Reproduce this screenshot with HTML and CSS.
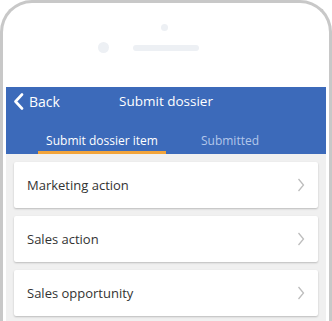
FILE: index.html
```html
<!DOCTYPE html>
<html lang="en">
<head>
  <meta charset="UTF-8" />
  <meta name="viewport" content="width=device-width, initial-scale=1.0"/>
  <title>Submit dossier</title>
  <link rel="stylesheet" href="styles.css">
</head>
<body>

  <div class="phone">
    <div class="bezel">
      <div class="kamera"></div>
      <div class="lautsprecher-reihe">
        <div class="sensor"></div>
        <div class="lautsprecher"></div>
        <div class="sensor leer"></div>
      </div>
    </div>

    <div class="screen">
      <div class="kopf">
        <div class="navbar">
          <div class="zurueck">
            <svg width="11" height="17" viewBox="0 0 11 17">
              <polyline points="9,1.5 2.5,8.5 9,15.5" fill="none" stroke="#fff" stroke-width="2.6" stroke-linecap="round" stroke-linejoin="round"/>
            </svg>
            <span>Back</span>
          </div>
          <div class="titel">Submit dossier</div>
          <div></div>
        </div>
        <div class="tabs">
          <div class="tab aktiv">Submit dossier item</div>
          <div class="tab">Submitted</div>
        </div>
      </div>

      <div class="liste">
        <div class="eintrag">
          <span>Marketing action</span>
          <svg class="pfeil" width="8" height="14" viewBox="0 0 8 14">
            <polyline points="1.5,1 6.5,7 1.5,13" fill="none" stroke="#bdbdbd" stroke-width="1.3"/>
          </svg>
        </div>
        <div class="eintrag">
          <span>Sales action</span>
          <svg class="pfeil" width="8" height="14" viewBox="0 0 8 14">
            <polyline points="1.5,1 6.5,7 1.5,13" fill="none" stroke="#bdbdbd" stroke-width="1.3"/>
          </svg>
        </div>
        <div class="eintrag">
          <span>Sales opportunity</span>
          <svg class="pfeil" width="8" height="14" viewBox="0 0 8 14">
            <polyline points="1.5,1 6.5,7 1.5,13" fill="none" stroke="#bdbdbd" stroke-width="1.3"/>
          </svg>
        </div>
      </div>
    </div>
  </div>

</body>
</html>
```

FILE: styles.css
```css
* {
  box-sizing: border-box;
}

body {
  margin: 0;
  padding: 0;
  overflow: hidden;
  background: #fff;
  font-family: "Open Sans", "Noto Sans", Arial, sans-serif;
}

.phone {
  display: flex;
  flex-direction: column;
  width: 332px;
  height: 321px;
  border: 3px solid #c8c8c8;
  border-bottom: none;
  border-radius: 32px 32px 0 0;
  padding: 0 3px;
  background: #fff;
  overflow: hidden;
}

.bezel {
  height: 84px;
  display: flex;
  flex-direction: column;
  align-items: center;
  padding-top: 21px;
}

.kamera {
  width: 7px;
  height: 7px;
  border-radius: 50%;
  background: #edf0f4;
  margin-left: -3px;
}

.lautsprecher-reihe {
  display: flex;
  align-items: center;
  gap: 24px;
  margin-top: 11px;
}

.sensor {
  width: 11px;
  height: 11px;
  border-radius: 50%;
  background: #edf0f4;
}

.sensor.leer {
  background: transparent;
}

.lautsprecher {
  width: 66px;
  height: 6px;
  border-radius: 3px;
  background: #edf0f4;
}

.screen {
  flex: 1;
  background: #f0f0f0;
  overflow: hidden;
}

.kopf {
  background: #3c6aba;
  color: #fff;
}

.navbar {
  display: grid;
  grid-template-columns: 1fr auto 1fr;
  align-items: center;
  height: 28px;
  padding: 0 7px;
}

.zurueck {
  display: flex;
  align-items: center;
  gap: 5px;
  font-size: 14px;
}

.titel {
  font-size: 13.5px;
}

.tabs {
  display: flex;
  padding: 0 32px;
  height: 39px;
}

.tab {
  flex: 1;
  text-align: center;
  font-size: 12px;
  line-height: 17px;
  padding-top: 17px;
  color: #b3c7ea;
  border-bottom: 3px solid transparent;
}

.tab.aktiv {
  color: #fff;
  border-bottom-color: #f2a43a;
}

.liste {
  display: flex;
  flex-direction: column;
  gap: 8px;
  padding: 8px;
}

.eintrag {
  display: flex;
  flex-shrink: 0;
  align-items: center;
  justify-content: space-between;
  height: 46px;
  padding: 0 13px;
  background: #fff;
  border-radius: 2px;
  box-shadow: 0 1px 2px rgba(0, 0, 0, 0.22);
  font-size: 13px;
  color: #333;
}
```
